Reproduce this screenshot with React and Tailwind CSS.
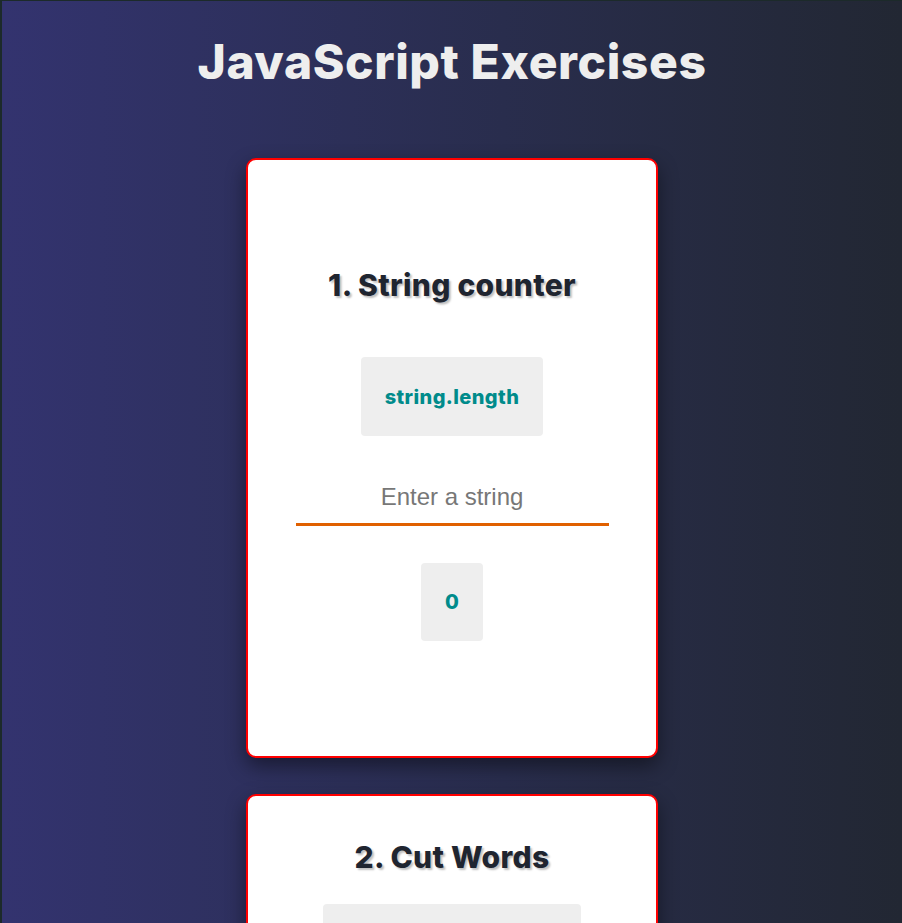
const headingFont = { fontFamily: 'Inter, "Noto Sans", sans-serif' };
const inputFont = { fontFamily: '"Liberation Sans", Arial, sans-serif' };

function CodeChip({ children, className = '' }) {
  return (
    <div
      className={`rounded bg-[#eeeeee] font-extrabold text-[#008b8b] tracking-[0.4px] flex items-center justify-center ${className}`}
      style={headingFont}
    >
      {children}
    </div>
  );
}

function CardTitle({ children }) {
  return (
    <h2
      className="text-[30px] leading-[42px] font-extrabold tracking-[0.3px] text-[#1f2530] [text-shadow:2px_2px_2px_#c0c0c0]"
      style={headingFont}
    >
      {children}
    </h2>
  );
}

function TextInput({ placeholder }) {
  return (
    <input
      type="text"
      placeholder={placeholder}
      className="mt-[47px] w-[313px] border-b-[3px] border-[#e06000] bg-transparent pb-[12px] text-center text-[24px] leading-[28px] text-[#333] placeholder:text-[#777] outline-none"
      style={inputFont}
    />
  );
}

const cardClass =
  'w-[412px] rounded-[10px] border-2 border-[#ff0000] bg-white shadow-[0_8px_20px_rgba(0,0,0,0.45)] flex flex-col items-center';

export default function App() {
  return (
    <div className="min-h-screen border-l-2 border-t border-[#1c2a2a] bg-gradient-to-r from-[#33336f] to-[#222733] pb-16 flex flex-col items-center">
      <h1
        className="mt-[25px] text-[48px] leading-[72px] font-extrabold tracking-[0.6px] text-[#eeeeee]"
        style={headingFont}
      >
        JavaScript Exercises
      </h1>
      <div className="mt-[60px] flex flex-col items-center gap-[36px]">
        <section className={`${cardClass} pt-[104px] pb-[115px]`}>
          <CardTitle>1. String counter</CardTitle>
          <CodeChip className="mt-[51px] h-[79px] px-[24px] text-[20px]">string.length</CodeChip>
          <TextInput placeholder="Enter a string" />
          <CodeChip className="mt-[37px] h-[78px] w-[62px] text-[20px]">0</CodeChip>
        </section>
        <section className={`${cardClass} pt-[40px] pb-[60px]`}>
          <CardTitle>2. Cut Words</CardTitle>
          <CodeChip className="mt-[26px] h-[79px] w-[258px] text-[20px]">string.split(" ")</CodeChip>
          <TextInput placeholder="Enter a sentence" />
        </section>
      </div>
    </div>
  );
}
